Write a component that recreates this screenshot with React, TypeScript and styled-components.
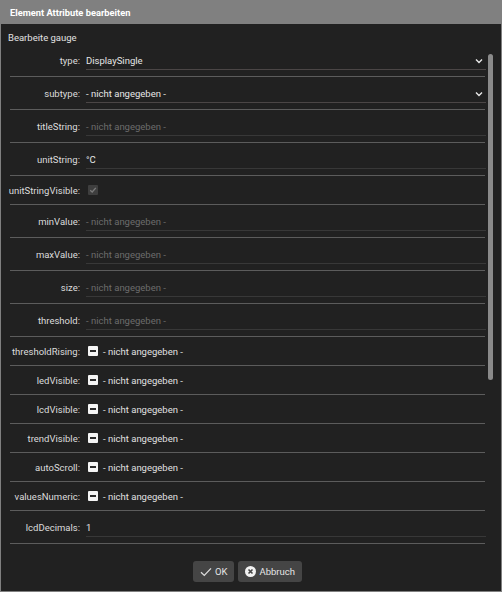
import React from "react";
import styled, { createGlobalStyle } from "styled-components";

const GlobalStyle = createGlobalStyle`
  html, body { margin: 0; padding: 0; background: #212121; }
  body { font-family: Roboto, "Liberation Sans", Arial, sans-serif; }
  * { box-sizing: border-box; }
`;

const Dialog = styled.div`
  width: 502px;
  height: 592px;
  border: 1px solid #808080;
  background: #212121;
  display: flex;
  flex-direction: column;
  font-family: Roboto, "Liberation Sans", Arial, sans-serif;
  font-size: 9.5px;
  color: #dedede;
`;

const TitleBar = styled.div`
  height: 23px;
  background: #808080;
  color: #ffffff;
  font-weight: 700;
  font-size: 9.3px;
  display: flex;
  align-items: center;
  padding-left: 9px;
  flex-shrink: 0;
`;

const Body = styled.div`
  flex: 1;
  display: flex;
  flex-direction: column;
  padding: 7px 7px 0 0;
  min-height: 0;
`;

const Heading = styled.div`
  line-height: 13px;
  padding-left: 7px;
  color: #e2e2e2;
`;

const ScrollArea = styled.div`
  height: 504px;
  display: flex;
`;

const Scroller = styled.div`
  flex: 1;
  overflow: hidden;
`;

const Track = styled.div`
  width: 6px;
  flex-shrink: 0;
  padding-top: 10px;
`;

const Thumb = styled.div`
  width: 5px;
  height: 326px;
  border-radius: 3px;
  background: #8a8a8a;
`;

const Row = styled.div<{ $compact?: boolean }>`
  height: ${(p) => (p.$compact ? 29 : 33)}px;
  margin: 0 3px 0 9px;
  border-bottom: 1px solid #5c5c5c;
  display: flex;
  align-items: center;
  gap: 6px;
`;

const Label = styled.div`
  width: 70px;
  flex-shrink: 0;
  display: flex;
  justify-content: flex-end;
  white-space: nowrap;
  color: #dcdcdc;
`;

const Field = styled.div<{ $select?: boolean }>`
  flex: 1;
  height: 18px;
  margin-top: 2px;
  margin-right: -1px;
  border-bottom: 1px solid ${(p) => (p.$select ? "#4b4646" : "#383838")};
  display: flex;
  align-items: center;
  justify-content: space-between;
  padding-right: 3px;
`;

const Value = styled.span<{ $placeholder?: boolean }>`
  color: ${(p) => (p.$placeholder ? "#6c6c6c" : "#e6e6e6")};
`;

const CheckWrap = styled.div`
  display: flex;
  align-items: center;
  gap: 5px;
  padding-left: 2px;
  color: #e0e0e0;
`;

const Box = styled.span<{ $disabled?: boolean }>`
  width: 10px;
  height: 10px;
  border-radius: 1px;
  background: ${(p) => (p.$disabled ? "#3e3e3e" : "#f4f4f4")};
  display: flex;
  align-items: center;
  justify-content: center;
`;

const Dash = styled.span`
  width: 6px;
  height: 2px;
  background: #2a2a2a;
`;

const Footer = styled.div`
  display: flex;
  justify-content: center;
  gap: 4px;
  padding-top: 13px;
`;

const Button = styled.button`
  height: 21px;
  background: #454545;
  border: none;
  border-radius: 3px;
  color: #e4e4e4;
  font-family: Roboto, "Liberation Sans", Arial, sans-serif;
  font-size: 9.5px;
  display: flex;
  align-items: center;
  gap: 3px;
  padding: 0 7px;
`;

const Chevron = () => (
  <svg width="8" height="6" viewBox="0 0 8 6">
    <path d="M1 1.5 L4 4.5 L7 1.5" stroke="#e8e8e8" strokeWidth="1.4" fill="none" />
  </svg>
);

type Attr =
  | { name: string; kind: "select"; value: string }
  | { name: string; kind: "text"; value?: string }
  | { name: string; kind: "check" }
  | { name: string; kind: "checked" };

const attrs: Attr[] = [
  { name: "type", kind: "select", value: "DisplaySingle" },
  { name: "subtype", kind: "select", value: "- nicht angegeben -" },
  { name: "titleString", kind: "text" },
  { name: "unitString", kind: "text", value: "°C" },
  { name: "unitStringVisible", kind: "checked" },
  { name: "minValue", kind: "text" },
  { name: "maxValue", kind: "text" },
  { name: "size", kind: "text" },
  { name: "threshold", kind: "text" },
  { name: "thresholdRising", kind: "check" },
  { name: "ledVisible", kind: "check" },
  { name: "lcdVisible", kind: "check" },
  { name: "trendVisible", kind: "check" },
  { name: "autoScroll", kind: "check" },
  { name: "valuesNumeric", kind: "check" },
  { name: "lcdDecimals", kind: "text", value: "1" },
];

const AttrRow = ({ a }: { a: Attr }) => {
  const compact = a.kind === "check" || a.kind === "checked";
  return (
    <Row $compact={compact}>
      <Label>{a.name}:</Label>
      {a.kind === "select" && (
        <Field $select>
          <Value>{a.value}</Value>
          <Chevron />
        </Field>
      )}
      {a.kind === "text" && (
        <Field>
          {a.value ? <Value>{a.value}</Value> : <Value $placeholder>- nicht angegeben -</Value>}
        </Field>
      )}
      {a.kind === "check" && (
        <CheckWrap>
          <Box>
            <Dash />
          </Box>
          <span>- nicht angegeben -</span>
        </CheckWrap>
      )}
      {a.kind === "checked" && (
        <CheckWrap>
          <Box $disabled>
            <svg width="8" height="8" viewBox="0 0 8 8">
              <path d="M1.2 4.2 L3.2 6 L6.8 1.8" stroke="#7a7a7a" strokeWidth="1.3" fill="none" />
            </svg>
          </Box>
        </CheckWrap>
      )}
    </Row>
  );
};

export default function App() {
  return (
    <>
      <GlobalStyle />
      <Dialog>
        <TitleBar>Element Attribute bearbeiten</TitleBar>
        <Body>
          <Heading>Bearbeite gauge</Heading>
          <ScrollArea>
            <Scroller>
              {attrs.map((a) => (
                <AttrRow key={a.name} a={a} />
              ))}
            </Scroller>
            <Track>
              <Thumb />
            </Track>
          </ScrollArea>
          <Footer>
            <Button>
              <svg width="12" height="10" viewBox="0 0 12 10">
                <path d="M1 5.2 L4.3 8.4 L11 1.4" stroke="#dcdcdc" strokeWidth="1.3" fill="none" />
              </svg>
              OK
            </Button>
            <Button>
              <svg width="11" height="11" viewBox="0 0 11 11">
                <circle cx="5.5" cy="5.5" r="5.5" fill="#f2f2f2" />
                <path d="M3.5 3.5 L7.5 7.5 M7.5 3.5 L3.5 7.5" stroke="#454545" strokeWidth="1.6" />
              </svg>
              Abbruch
            </Button>
          </Footer>
        </Body>
      </Dialog>
    </>
  );
}
